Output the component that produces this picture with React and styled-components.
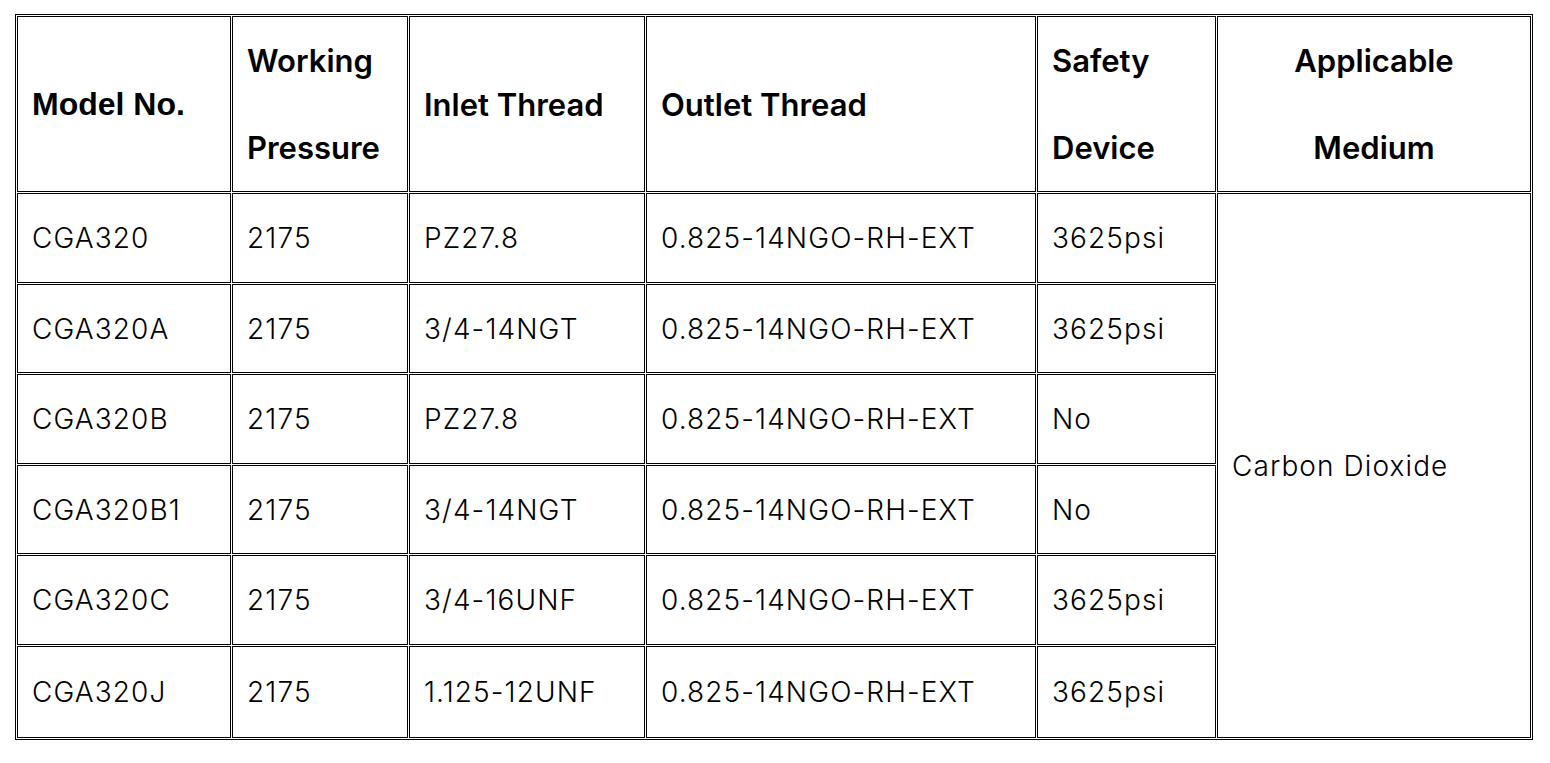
import React from "react";
import styled, { createGlobalStyle } from "styled-components";

const Global = createGlobalStyle`
  html, body { margin: 0; padding: 0; background: #ffffff; }
  body { font-family: Inter, "Noto Sans", sans-serif; color: #000; }
`;

const Page = styled.div`
  padding: 14px 0 0 15px;
`;

const Table = styled.table`
  width: 1518px;
  border: 1px solid #000;
  border-collapse: separate;
  border-spacing: 1px;
  table-layout: fixed;
`;

const Th = styled.th`
  border: 1px solid #000;
  padding: ${(p) => (p.$center ? "0" : "0 0 0 14px")};
  height: 175px;
  vertical-align: middle;
  text-align: ${(p) => (p.$center ? "center" : "left")};
  font-family: ${(p) => (p.$arial ? '"Liberation Sans", Arial, sans-serif' : 'Inter, "Noto Sans", sans-serif')};
  font-weight: ${(p) => (p.$arial ? 700 : 600)};
  font-size: ${(p) => (p.$arial ? 32 : 31)}px;
  line-height: 87px;
  box-sizing: border-box;
`;

const Td = styled.td`
  border: 1px solid #000;
  padding: 0 0 0 14px;
  height: ${(p) => p.$h}px;
  vertical-align: middle;
  font-family: Inter, "Noto Sans", sans-serif;
  font-weight: 300;
  font-size: 28px;
  letter-spacing: 1.1px;
  line-height: 32px;
  white-space: nowrap;
  box-sizing: border-box;
`;

const cols = [214, 176, 236, 390, 179, 314];

const rows = [
  ["CGA320", "2175", "PZ27.8", "0.825-14NGO-RH-EXT", "3625psi"],
  ["CGA320A", "2175", "3/4-14NGT", "0.825-14NGO-RH-EXT", "3625psi"],
  ["CGA320B", "2175", "PZ27.8", "0.825-14NGO-RH-EXT", "No"],
  ["CGA320B1", "2175", "3/4-14NGT", "0.825-14NGO-RH-EXT", "No"],
  ["CGA320C", "2175", "3/4-16UNF", "0.825-14NGO-RH-EXT", "3625psi"],
  ["CGA320J", "2175", "1.125-12UNF", "0.825-14NGO-RH-EXT", "3625psi"],
];
const heights = [90, 89, 90, 89, 90, 92];

export default function App() {
  return (
    <Page>
      <Global />
      <Table>
        <colgroup>
          {cols.map((w, i) => (
            <col key={i} style={{ width: w }} />
          ))}
        </colgroup>
        <thead>
          <tr>
            <Th $arial>Model No.</Th>
            <Th>Working<br />Pressure</Th>
            <Th>Inlet Thread</Th>
            <Th>Outlet Thread</Th>
            <Th>Safety<br />Device</Th>
            <Th $center>Applicable<br />Medium</Th>
          </tr>
        </thead>
        <tbody>
          {rows.map((r, i) => (
            <tr key={i}>
              {r.map((c, j) => (
                <Td key={j} $h={heights[i]}>{c}</Td>
              ))}
              {i === 0 && (
                <Td rowSpan={6} $h={heights[0]}>Carbon Dioxide</Td>
              )}
            </tr>
          ))}
        </tbody>
      </Table>
    </Page>
  );
}
